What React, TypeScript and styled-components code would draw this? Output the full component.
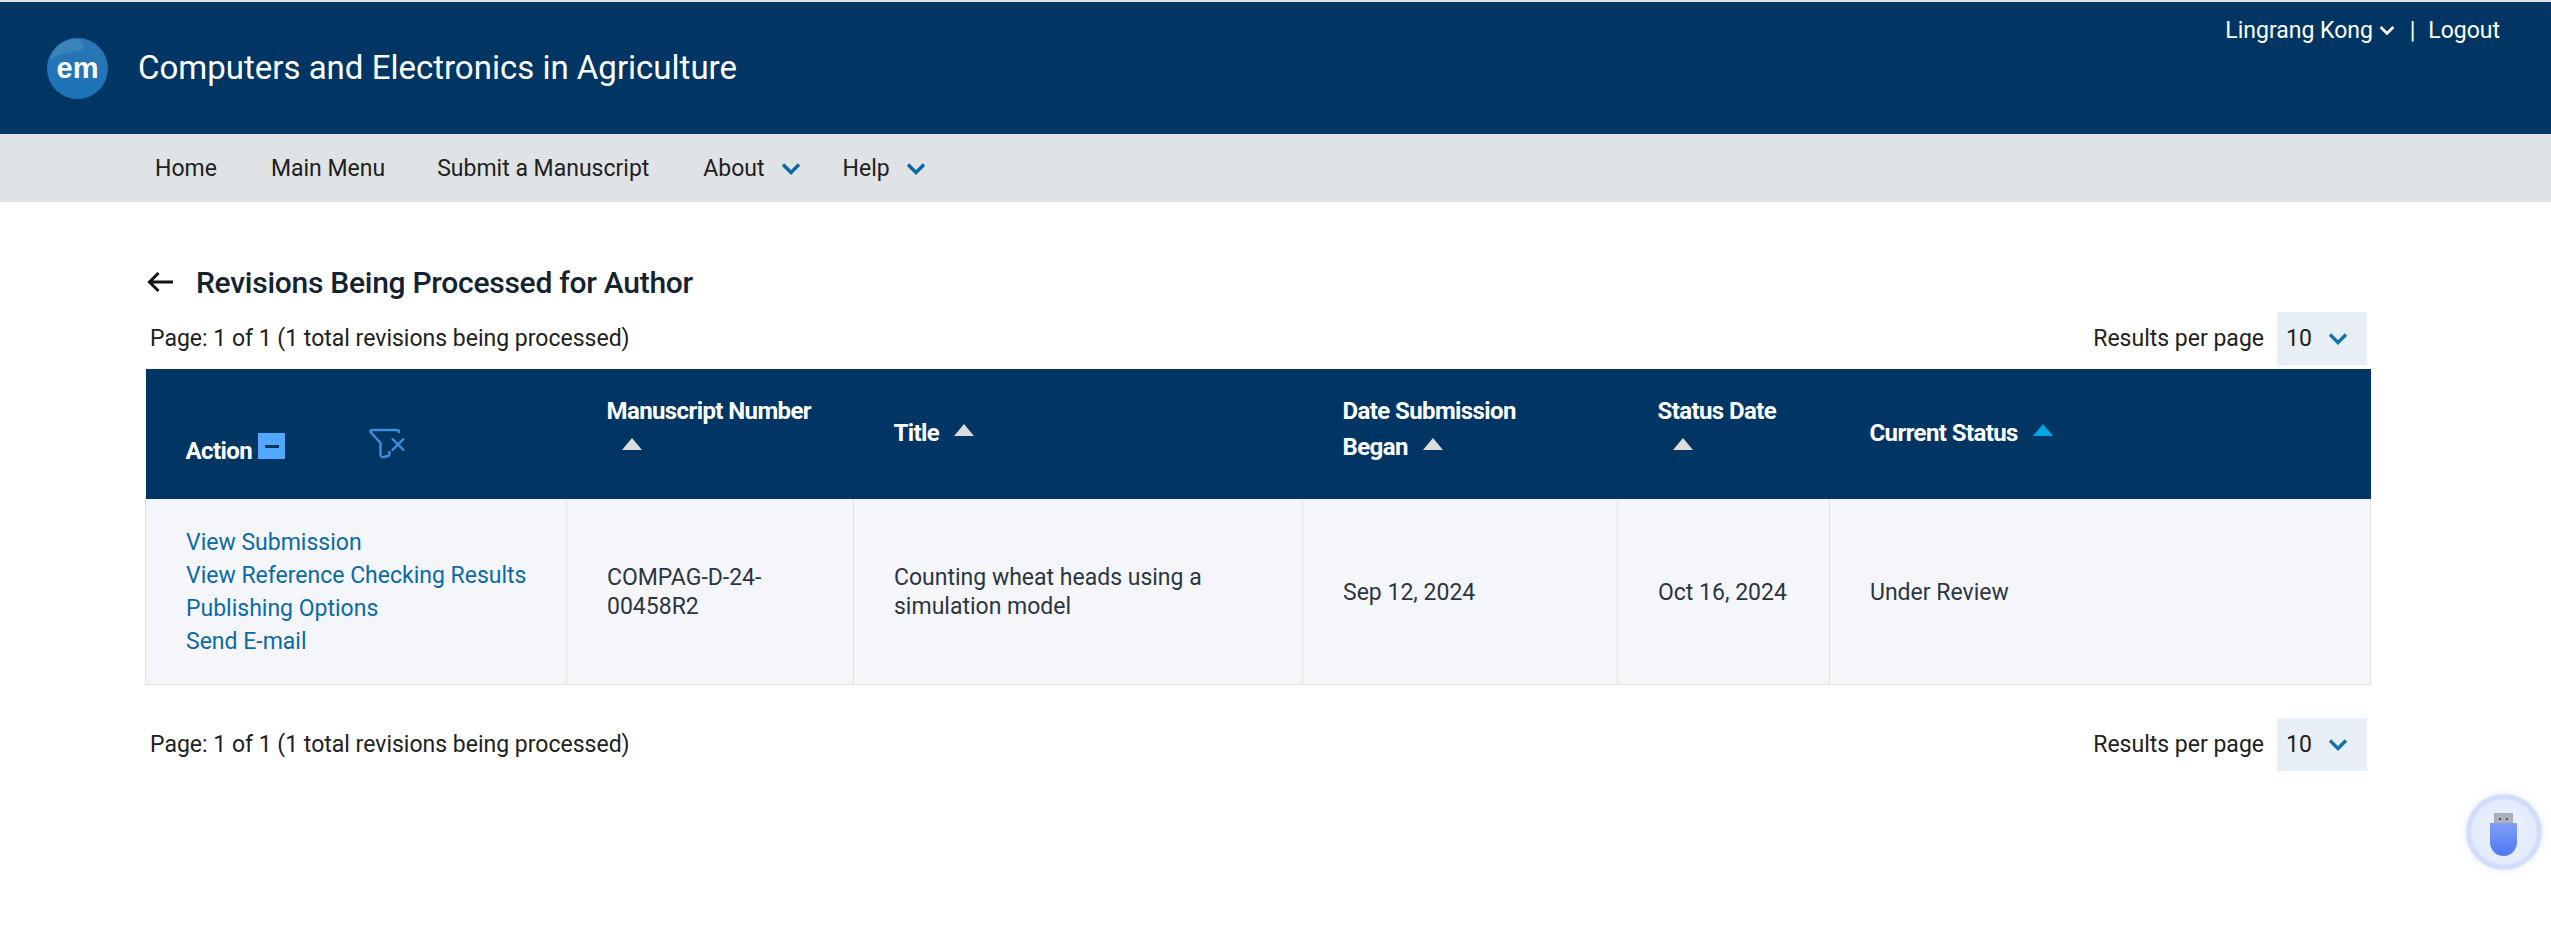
import React from 'react'
import styled, { createGlobalStyle } from 'styled-components'

const GlobalStyle = createGlobalStyle`
  html, body {
    margin: 0;
    padding: 0;
    background: #fff;
    font-family: Roboto, "Liberation Sans", sans-serif;
    color: #212529;
  }
`

const Page = styled.div`
  min-height: 947px;
  border-top: 2px solid #dfe3e6;
  box-sizing: border-box;
`

const Header = styled.header`
  height: 132px;
  background: #003564;
  display: flex;
  justify-content: space-between;
  color: #fff;
`

const Brand = styled.div`
  display: flex;
  align-items: center;
  gap: 30px;
  padding-left: 47px;
  height: 132px;
`

const JournalTitle = styled.div`
  font-size: 33px;
  line-height: 40px;
`

const UserMenu = styled.div`
  display: flex;
  align-items: center;
  height: 56px;
  padding-right: 51px;
  font-size: 23px;
`

const Separator = styled.span`
  margin: 0 13px 0 15px;
`

const NavBar = styled.nav`
  height: 68px;
  background: #dfe3e6;
  display: flex;
  align-items: center;
  padding-left: 155px;
  font-size: 23px;
  color: #212121;
`

const NavItem = styled.span<{ $gap: number }>`
  display: flex;
  align-items: center;
  gap: 16px;
  margin-right: ${(p) => p.$gap}px;
`

const Content = styled.main`
  width: 2226px;
  margin-left: 145px;
`

const TitleRow = styled.div`
  display: flex;
  align-items: center;
  gap: 21px;
  height: 40px;
  margin-top: 60px;
  padding-left: 1px;
  font-size: 30px;
  font-weight: 500;
  letter-spacing: -0.27px;
  color: #14232f;
`

const PagerRow = styled.div<{ $top: number }>`
  display: flex;
  justify-content: space-between;
  align-items: center;
  height: 53px;
  margin-top: ${(p) => p.$top}px;
  padding: 0 4px 0 5px;
  font-size: 23px;
  color: #212121;
`

const PerPage = styled.div`
  display: flex;
  align-items: center;
  gap: 13px;
`

const PerPageSelect = styled.div`
  width: 90px;
  height: 53px;
  background: #e9eff7;
  display: flex;
  align-items: center;
  gap: 16px;
  padding-left: 9px;
  box-sizing: border-box;
`

const Table = styled.table`
  width: 2226px;
  margin-top: 4px;
  border-collapse: collapse;
  table-layout: fixed;
`

const Th = styled.th<{ $top?: number; $bottom?: number }>`
  height: 130px;
  padding: ${(p) => p.$top ?? 0}px 0 ${(p) => p.$bottom ?? 2}px 40px;
  background: #003564;
  color: #fff;
  font-size: 24px;
  font-weight: 700;
  line-height: 36px;
  text-align: left;
  letter-spacing: -0.6px;
  box-sizing: border-box;
`

const Td = styled.td`
  height: 185px;
  padding: 2px 20px 0 40px;
  background: #f5f6fa;
  border: 1px solid #dfe3e6;
  border-top: 0;
  font-size: 23px;
  line-height: 29px;
  color: #2b3640;
  box-sizing: border-box;
`

const ActionLink = styled.a`
  display: block;
  color: #0a6aa8;
  line-height: 33px;
  white-space: nowrap;
`

const ActionHead = styled.div`
  display: flex;
  align-items: center;
`

const CollapseBox = styled.span`
  width: 27px;
  height: 26px;
  margin: -10px 0 0 6px;
  background: #52a8ff;
  display: flex;
  align-items: center;
  justify-content: center;
  &::before {
    content: '';
    width: 14px;
    height: 3px;
    background: #003564;
  }
`

const FilterIcon = styled.svg`
  margin: -16px 0 0 84px;
`

const SortMark = styled.span<{ $active?: boolean }>`
  display: inline-block;
  width: 0;
  height: 0;
  margin-left: 15px;
  vertical-align: 5px;
  border-left: 10px solid transparent;
  border-right: 10px solid transparent;
  border-bottom: 12px solid ${(p) => (p.$active ? '#00a7e1' : '#dcdcdc')};
`

const UsbBadge = styled.div`
  position: fixed;
  left: 2466px;
  top: 794px;
  width: 76px;
  height: 76px;
  padding-top: 5px;
  box-sizing: border-box;
  border-radius: 50%;
  background: radial-gradient(circle closest-side, #eef3fd 0%, #e4ebfc 84%, #d3dffc 87%, #cfdcfc 100%);
  box-shadow: 0 0 8px rgba(160, 185, 240, 0.3);
  display: flex;
  align-items: center;
  justify-content: center;
`

const Chevron: React.FC<{ color: string; size: number; weight?: number }> = ({ color, size, weight = 3.4 }) => (
  <svg width={size} height={size * 0.65} viewBox="0 0 20 13" fill="none">
    <path d="M2 2.5 L10 10.5 L18 2.5" stroke={color} strokeWidth={weight} />
  </svg>
)

const Logo = () => (
  <svg width="61" height="61" viewBox="0 0 61 61">
    <defs>
      <linearGradient id="logoFill" x1="0" y1="0" x2="0" y2="1">
        <stop offset="0" stopColor="#2a77b3" />
        <stop offset="1" stopColor="#1c72b8" />
      </linearGradient>
    </defs>
    <circle cx="30.5" cy="30.5" r="30.5" fill="url(#logoFill)" />
    <path d="M3 22 C14 14 26 15 34 12 C39 10 36 4 32 1 C16 0 6 9 3 22Z" fill="#3a82ba" />
    <text x="30.5" y="40" textAnchor="middle" fontFamily="'Liberation Sans', sans-serif" fontWeight="700" fontSize="29" fill="#fff">
      em
    </text>
  </svg>
)

const BackArrow = () => (
  <svg width="29" height="24" viewBox="0 0 29 24" fill="none">
    <path d="M27 12 H4 M12.5 3 L3.5 12 L12.5 21" stroke="#111" strokeWidth="3" />
  </svg>
)

const UsbIcon = () => (
  <svg width="30" height="44" viewBox="0 0 30 44">
    <defs>
      <linearGradient id="usbBody" x1="0" y1="0" x2="0" y2="1">
        <stop offset="0" stopColor="#7f9ff5" />
        <stop offset="1" stopColor="#4f78f4" />
      </linearGradient>
    </defs>
    <rect x="5" y="0" width="19" height="11" fill="#a9afb9" />
    <rect x="10" y="5" width="2" height="2" fill="#555" />
    <rect x="17" y="5" width="2" height="2" fill="#555" />
    <path d="M1 10 H28 V29 C28 37 22 43 14.5 43 C7 43 1 37 1 29Z" fill="url(#usbBody)" />
  </svg>
)

const Pager: React.FC<{ top: number }> = ({ top }) => (
  <PagerRow $top={top}>
    <span>Page: 1 of 1 (1 total revisions being processed)</span>
    <PerPage>
      Results per page
      <PerPageSelect>
        10
        <Chevron color="#1672ad" size={20} />
      </PerPageSelect>
    </PerPage>
  </PagerRow>
)

const App: React.FC = () => (
  <Page>
    <GlobalStyle />
    <Header>
      <Brand>
        <Logo />
        <JournalTitle>Computers and Electronics in Agriculture</JournalTitle>
      </Brand>
      <UserMenu>
        Lingrang Kong&nbsp;
        <Chevron color="#fff" size={16} weight={3.4} />
        <Separator>|</Separator>
        Logout
      </UserMenu>
    </Header>
    <NavBar>
      <NavItem $gap={54}>Home</NavItem>
      <NavItem $gap={52}>Main Menu</NavItem>
      <NavItem $gap={54}>Submit a Manuscript</NavItem>
      <NavItem $gap={42}>
        About
        <Chevron color="#0a6aa8" size={20} />
      </NavItem>
      <NavItem $gap={0}>
        Help
        <Chevron color="#0a6aa8" size={20} />
      </NavItem>
    </NavBar>
    <Content>
      <TitleRow>
        <BackArrow />
        Revisions Being Processed for Author
      </TitleRow>
      <Pager top={10} />
      <Table>
        <colgroup>
          <col width="421" />
          <col width="287" />
          <col width="449" />
          <col width="315" />
          <col width="212" />
          <col />
        </colgroup>
        <thead>
          <tr>
            <Th $top={34} $bottom={0}>
              <ActionHead>
                Action
                <CollapseBox />
                <FilterIcon width="37" height="31" viewBox="0 0 37 31" fill="none" stroke="#3f8fdc" strokeWidth="2.4">
                  <path d="M30 5 V4 C30 2.5 29 2 28 2 H3 C1.5 2 1 3.5 2 4.5 L11.5 15 V26 C11.5 28.5 13 29.5 15 29 L19 28 C20 27.5 20.5 27 20.5 25 V23" />
                  <path d="M23 10.5 L35 22.5 M35 10.5 L23 22.5" />
                </FilterIcon>
              </ActionHead>
            </Th>
            <Th $bottom={10}>
              Manuscript Number
              <br />
              <SortMark />
            </Th>
            <Th>
              Title
              <SortMark />
            </Th>
            <Th $bottom={10}>
              Date Submission
              <br />
              Began
              <SortMark />
            </Th>
            <Th $bottom={10}>
              Status Date
              <br />
              <SortMark />
            </Th>
            <Th>
              Current Status
              <SortMark $active />
            </Th>
          </tr>
        </thead>
        <tbody>
          <tr>
            <Td>
              <ActionLink>View Submission</ActionLink>
              <ActionLink>View Reference Checking Results</ActionLink>
              <ActionLink>Publishing Options</ActionLink>
              <ActionLink>Send E-mail</ActionLink>
            </Td>
            <Td>COMPAG-D-24-00458R2</Td>
            <Td>Counting wheat heads using a simulation model</Td>
            <Td>Sep 12, 2024</Td>
            <Td>Oct 16, 2024</Td>
            <Td>Under Review</Td>
          </tr>
        </tbody>
      </Table>
      <Pager top={33} />
    </Content>
    <UsbBadge>
      <UsbIcon />
    </UsbBadge>
  </Page>
)

export default App
